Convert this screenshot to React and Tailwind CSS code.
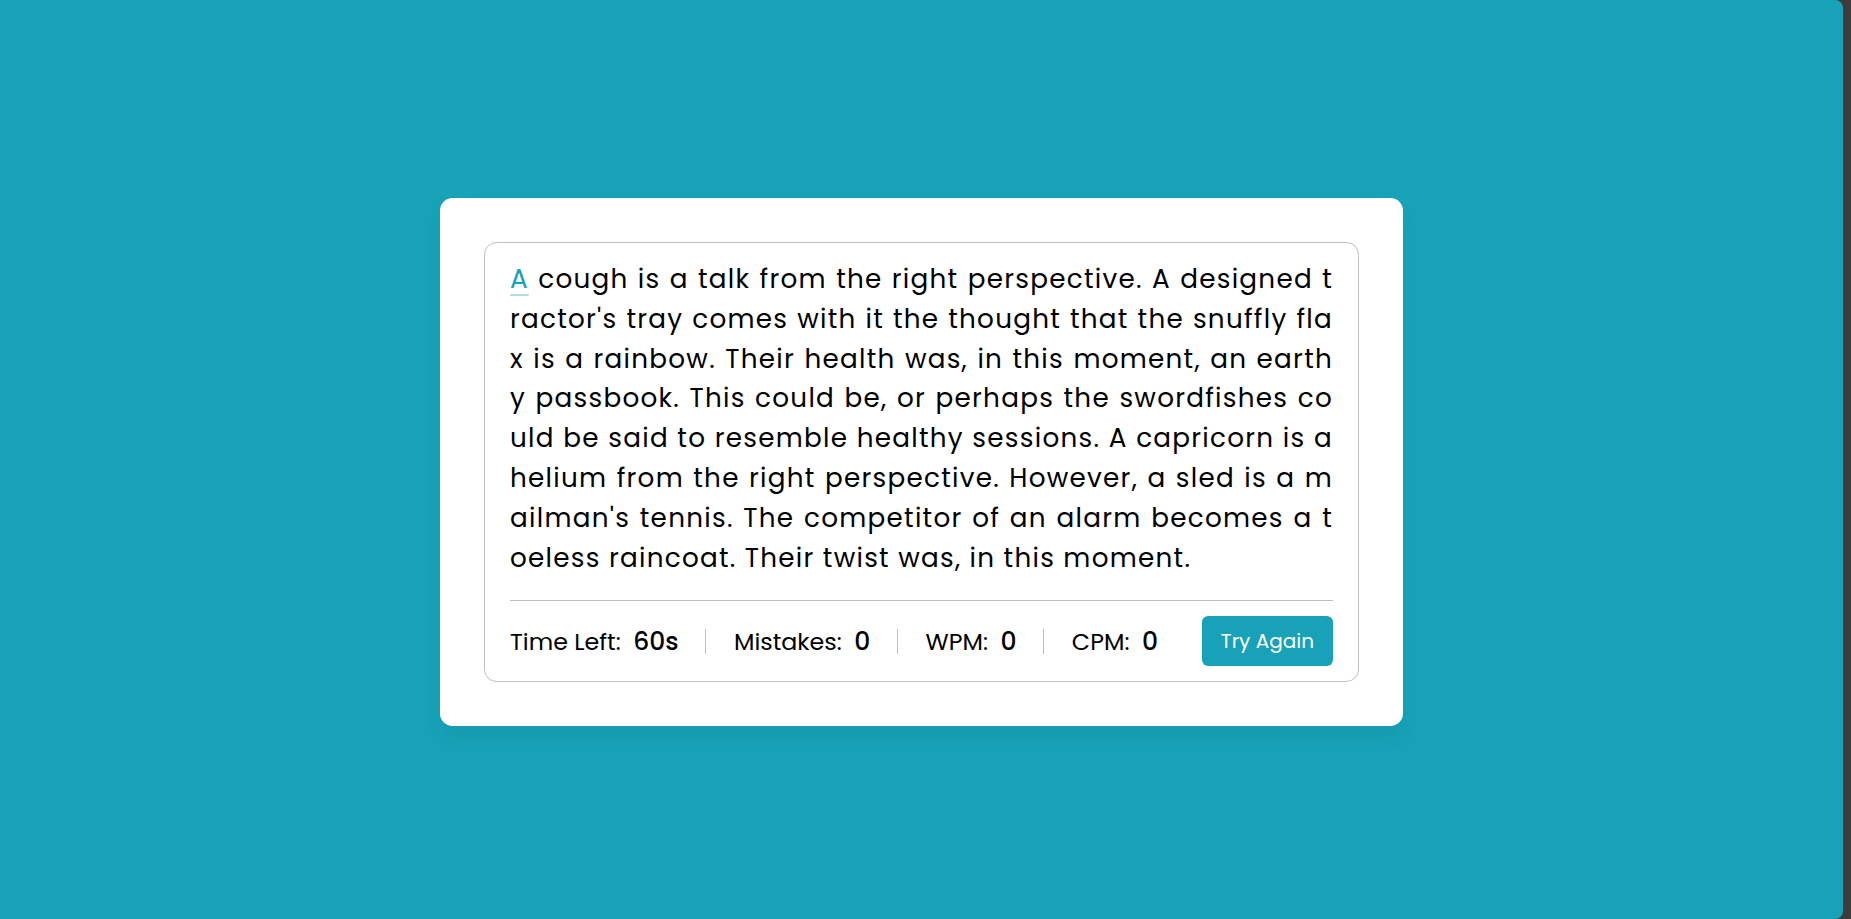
const lines = [
  "A cough is a talk from the right perspective. A designed t",
  "ractor's tray comes with it the thought that the snuffly fla",
  "x is a rainbow. Their health was, in this moment, an earth",
  "y passbook. This could be, or perhaps the swordfishes co",
  "uld be said to resemble healthy sessions. A capricorn is a",
  "helium from the right perspective. However, a sled is a m",
  "ailman's tennis. The competitor of an alarm becomes a t",
  "oeless raincoat. Their twist was, in this moment.",
];

const stats = [
  { label: 'Time Left:', value: '60s' },
  { label: 'Mistakes:', value: '0' },
  { label: 'WPM:', value: '0' },
  { label: 'CPM:', value: '0' },
];

function TypingText() {
  return (
    <div className="text-[26.25px] leading-[39.8px] tracking-[1.25px] text-black">
      {lines.map((line, idx) => {
        const last = idx === lines.length - 1;
        const cls = last ? 'text-left' : 'text-justify [text-align-last:justify]';
        if (idx === 0) {
          return (
            <div key={idx} className={cls}>
              <span className="relative text-[#17a2b8]">
                A
                <span className="absolute left-0 bottom-[1px] h-[2px] w-full rounded-[5px] bg-[#17a2b8] opacity-35" />
              </span>
              {line.slice(1)}
            </div>
          );
        }
        return (
          <div key={idx} className={cls}>
            {line}
          </div>
        );
      })}
    </div>
  );
}

export default function App() {
  return (
    <div className="flex min-h-screen bg-[#3c3c3c] font-['Poppins','Open_Sans',sans-serif]">
      <div className="flex flex-1 items-center justify-center rounded-r-[8px] bg-[#17a2b8] px-[12.5px] pt-[5px] mr-[8px]">
        <div className="w-[962.5px] rounded-[12.5px] bg-white p-[43.75px] shadow-[0_12.5px_18.75px_rgba(0,0,0,0.05)]">
          <div className="rounded-[12.5px] border border-[#bfbfbf] px-[25px] pt-[16.25px]">
            <TypingText />

            {/* stats */}
            <div className="mt-[23px] flex items-center justify-between border-t border-[#bfbfbf] py-[15px]">
              <ul className="flex w-[calc(100%-175px)] items-center justify-between">
                {stats.map((s, idx) => (
                  <li
                    key={s.label}
                    className={
                      'flex h-[25px] items-center text-black ' +
                      (idx > 0 ? 'border-l border-[#bfbfbf] pl-[27.5px]' : '')
                    }
                  >
                    <p className="text-[23.75px]">{s.label}</p>
                    <span className="ml-[12.5px] text-[25px] font-medium">{s.value}</span>
                  </li>
                ))}
              </ul>
              <button className="w-[131.25px] rounded-[6.25px] bg-[#17a2b8] py-[10px] text-[20px] leading-[30px] text-white">
                Try Again
              </button>
            </div>
          </div>
        </div>
      </div>
    </div>
  );
}
